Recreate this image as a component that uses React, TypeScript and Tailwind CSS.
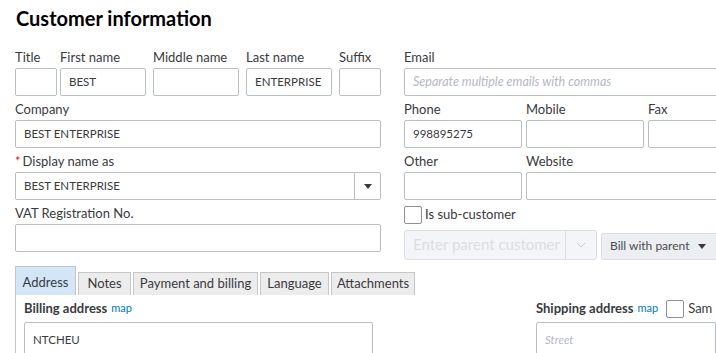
import React from 'react';

const font = "font-['Lato','Liberation_Sans',sans-serif]";

function Label({ children, className = '' }: { children: React.ReactNode; className?: string }) {
  return (
    <div className={`mt-[5px] mb-[3px] text-[13px] leading-4 whitespace-nowrap text-[#393a3d] ${className}`}>
      {children}
    </div>
  );
}

function Box({ value, placeholder, className = '' }: { value?: string; placeholder?: string; className?: string }) {
  return (
    <div
      className={`h-[28px] border border-[#babec5] rounded-[2px] bg-white flex items-center px-2 text-[11.5px] whitespace-nowrap overflow-hidden ${className}`}
    >
      {value ? (
        <span className="text-[#393a3d]">{value}</span>
      ) : placeholder ? (
        <span className="italic text-[12.5px] text-[#b5b8bf]">{placeholder}</span>
      ) : null}
    </div>
  );
}

function Field({ label, value, placeholder, w }: { label: React.ReactNode; value?: string; placeholder?: string; w: string }) {
  return (
    <div className={`shrink-0 ${w}`}>
      <Label>{label}</Label>
      <Box value={value} placeholder={placeholder} />
    </div>
  );
}

function Caret({ className = '' }: { className?: string }) {
  return (
    <svg width="8" height="5" viewBox="0 0 8 5" className={className}>
      <path d="M0 0h8L4 5z" fill="#393a3d" />
    </svg>
  );
}

function Check({ className = '' }: { className?: string }) {
  return <div className={`w-[18px] h-[18px] shrink-0 border border-[#8d9096] rounded-[2px] bg-white ${className}`} />;
}

const tabs = [
  { name: 'Address', w: 'w-[61px]' },
  { name: 'Notes', w: 'w-[53px]' },
  { name: 'Payment and billing', w: 'w-[125px]' },
  { name: 'Language', w: 'w-[69px]' },
  { name: 'Attachments', w: 'w-[84px]' },
];

export default function App() {
  return (
    <div className={`w-[716px] h-[353px] overflow-hidden bg-white text-[#393a3d] ${font}`}>
      <h1 className="pl-4 pt-1 text-[20px] leading-[28px] font-bold text-[#000]">Customer information</h1>

      <div className="flex pl-[15px] mt-[12px]">
        {/* Left column */}
        <div className="w-[366px] shrink-0">
          <div className="flex">
            <Field label="Title" w="w-[42px]" />
            <div className="w-[3px]" />
            <Field label="First name" value="BEST" w="w-[86px]" />
            <div className="w-[7px]" />
            <Field label="Middle name" w="w-[86px]" />
            <div className="w-[7px]" />
            <Field label="Last name" value="ENTERPRISE" w="w-[86px]" />
            <div className="w-[7px]" />
            <Field label="Suffix" w="w-[42px]" />
          </div>
          <Field label="Company" value="BEST ENTERPRISE" w="w-[366px]" />
          <div>
            <Label>
              <span className="text-[#d52b1e] mr-[2px]">*</span>Display name as
            </Label>
            <div className="h-[28px] border border-[#babec5] rounded-[2px] flex items-stretch text-[11.5px]">
              <div className="flex-1 flex items-center px-2">BEST ENTERPRISE</div>
              <div className="w-[26px] border-l border-[#babec5] flex items-center justify-center">
                <Caret />
              </div>
            </div>
          </div>
          <Field label="VAT Registration No." w="w-[366px]" />
        </div>

        {/* Right column */}
        <div className="ml-[23px] w-[340px] shrink-0">
          <Field label="Email" placeholder="Separate multiple emails with commas" w="w-[340px]" />
          <div className="flex gap-[4px]">
            <Field label="Phone" value="998895275" w="w-[118px]" />
            <Field label="Mobile" w="w-[118px]" />
            <Field label="Fax" w="w-[118px]" />
          </div>
          <div className="flex gap-[4px]">
            <Field label="Other" w="w-[118px]" />
            <Field label="Website" w="w-[240px]" />
          </div>
          <div className="flex items-center gap-[3px] mt-[5px] text-[13px]">
            <Check />
            <span>Is sub-customer</span>
          </div>
          <div className="flex items-end gap-[4px] mt-[5px]">
            <div className="w-[193px] h-[30px] border border-[#dcdee2] rounded-[3px] bg-[#f4f5f8] flex items-stretch shrink-0">
              <div className="flex-1 flex items-center pl-2 text-[15px] text-[#dcdde0] whitespace-nowrap overflow-hidden">
                Enter parent customer
              </div>
              <div className="w-[31px] border-l border-[#dcdee2] flex items-center justify-center">
                <svg width="10" height="6" viewBox="0 0 10 6">
                  <path d="M1 1l4 4 4-4" fill="none" stroke="#c9cbd0" strokeWidth="1" />
                </svg>
              </div>
            </div>
            <div className="w-[130px] h-[27px] border border-[#dcdee2] rounded-[2px] bg-[#eceef1] flex items-center pl-2 pr-[10px] text-[12px] text-[#4a4b50] shrink-0">
              <span className="flex-1">Bill with parent</span>
              <Caret className="mr-[14px]" />
            </div>
          </div>
        </div>
      </div>

      {/* Tabs */}
      <div className="flex items-end gap-[2px] pl-[15px] mt-[6px] h-[29px]">
        {tabs.map((t, i) => (
          <div
            key={t.name}
            className={`${t.w} shrink-0 flex items-center justify-center text-[13px] border border-[#c6c6c6] border-b-0 ${
              i === 0 ? 'h-[29px] bg-[#d3e6f7] pt-[4px]' : 'h-[23px] bg-[#ececec]'
            }`}
          >
            {t.name}
          </div>
        ))}
      </div>

      {/* Tab content */}
      <div className="ml-[15px] border-l border-[#c6c6c6] pl-2 pt-[5px] flex">
        <div className="w-[349px] shrink-0">
          <div className="h-[18px] flex items-center gap-[4px] whitespace-nowrap">
            <span className="text-[13px] font-bold text-[#393a3d]">Billing address</span>
            <span className="text-[11px] text-[#0077c5]">map</span>
          </div>
          <div className="mt-[4px] h-[40px] border border-[#babec5] rounded-[2px] px-2 pt-[8px] text-[11.5px]">NTCHEU</div>
        </div>
        <div className="ml-[163px] w-[180px] shrink-0">
          <div className="h-[18px] flex items-center gap-[4px] whitespace-nowrap overflow-hidden">
            <span className="text-[13px] font-bold text-[#393a3d]">Shipping address</span>
            <span className="text-[11px] text-[#0077c5]">map</span>
            <Check className="ml-[4px]" />
            <span className="text-[13px]">Sam</span>
          </div>
          <div className="mt-[4px] h-[40px] border border-[#babec5] rounded-[2px] px-2 pt-[8px] text-[11.5px] italic text-[#b5b8bf]">
            Street
          </div>
        </div>
      </div>
    </div>
  );
}
